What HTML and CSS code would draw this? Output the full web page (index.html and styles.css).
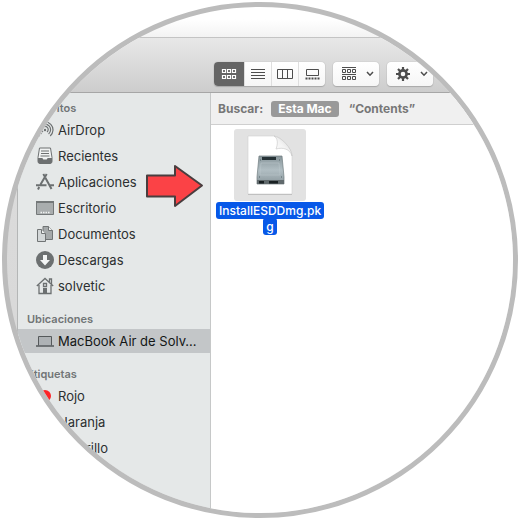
FILE: index.html
```html
<!DOCTYPE html>
<html lang="es">
<head>
<meta charset="utf-8">
<title>Contents</title>
<link rel="stylesheet" href="styles.css">
</head>
<body>
<main class="lens">
  <div class="window">
    <header class="toolbar">
      <div class="group">
        <button class="tool tool-active" aria-label="Iconos">
          <svg width="16" height="12" viewBox="0 0 16 12" fill="none" stroke="currentColor" stroke-width="1.200"><path d="M1.500 1.500h3v3h-3zM6.500 1.500h3v3h-3zM11.500 1.500h3v3h-3zM1.500 7.500h3v3h-3zM6.500 7.500h3v3h-3zM11.500 7.500h3v3h-3z"/></svg>
        </button>
        <button class="tool" aria-label="Lista">
          <svg width="14" height="12" viewBox="0 0 14 12" fill="none" stroke="currentColor"><path d="M0 1.500h14M0 4.500h14M0 7.500h14M0 10.500h14"/></svg>
        </button>
        <button class="tool" aria-label="Columnas">
          <svg width="16" height="12" viewBox="0 0 16 12" fill="none" stroke="currentColor"><path d="M.5 1.500h15v9H.5zM5.500 1.500v9M10.500 1.500v9"/></svg>
        </button>
        <button class="tool" aria-label="Galería">
          <svg width="15" height="12" viewBox="0 0 15 12" fill="none" stroke="currentColor"><path d="M1.500 1.500h12v6h-12z"/><path d="M.5 10.500h14" stroke-width="2" stroke-dasharray="2 1"/></svg>
        </button>
      </div>
      <div class="group">
        <button class="tool tool-menu" aria-label="Agrupar">
          <svg width="14" height="14" viewBox="0 0 14 14" fill="none" stroke="currentColor"><path d="M0 .5h14M0 7.500h14M.5 2.500h3v3h-3zM5.500 2.500h3v3h-3zM10.500 2.500h3v3h-3zM.5 9.500h3v3h-3zM5.500 9.500h3v3h-3zM10.500 9.500h3v3h-3z"/></svg>
          <svg width="8" height="6" viewBox="0 0 8 6" fill="none" stroke="currentColor" stroke-width="1.500"><path d="M1 1l3 3.200L7 1"/></svg>
        </button>
      </div>
      <div class="group">
        <button class="tool tool-menu" aria-label="Acciones">
          <svg width="14" height="14" viewBox="-7 -7 14 14" fill="none" stroke="currentColor"><circle r="3.600" stroke-width="2.600"/><path d="M0-7v3M0 7V4M-7 0h3M7 0H4M-5-5l2.200 2.200M5 5L2.800 2.800M-5 5l2.200-2.200M5-5L2.800-2.800" stroke-width="2.200"/></svg>
          <svg width="8" height="6" viewBox="0 0 8 6" fill="none" stroke="currentColor" stroke-width="1.500"><path d="M1 1l3 3.200L7 1"/></svg>
        </button>
      </div>
    </header>
    <div class="content">
      <nav class="sidebar">
        <h2 class="heading">Favoritos</h2>
        <ul class="list">
          <li><a class="place" href="#"><svg class="icon" viewBox="0 0 18 18" fill="none" stroke="currentColor" stroke-width="1.200"><path d="M3.800 15A8 8 0 1 1 14.200 15M5.400 13A5.600 5.600 0 1 1 12.600 13M7 11A3.200 3.200 0 1 1 11 11"/><circle cx="9" cy="9" r="1.200" fill="currentColor" stroke="none"/></svg>AirDrop</a></li>
          <li><a class="place" href="#"><svg class="icon" viewBox="0 0 18 18"><path d="M3.500 1h11l1.500 9.500v4a2 2 0 0 1-2 2H4a2 2 0 0 1-2-2v-4z" fill="#f0f2f2" stroke="#6d7071"/><path d="M5 4h8M5 6.500h8M4.500 9h9" stroke="#6d7071" stroke-width="1.200"/><path d="M2 11h4.500c.3 1 .8 1.500 1.500 1.500h2c.7 0 1.200-.5 1.500-1.500H16v3.500a2 2 0 0 1-2 2H4a2 2 0 0 1-2-2z" fill="#6d7071"/></svg>Recientes</a></li>
          <li><a class="place" href="#"><svg class="icon" viewBox="0 0 18 18" fill="none" stroke="currentColor" stroke-width="2"><path d="M7.300 1l2.200 3.700M10.700 1L4.500 11.500M9.500 5l6 11M0 12.200h10.500M13.300 12.200H18M3.200 14l-1.200 2.500"/></svg>Aplicaciones</a></li>
          <li><a class="place" href="#"><svg class="icon" viewBox="0 0 18 18"><path d="M.5 2.500h17v13H.5z" fill="#a9adae" stroke="#747879"/><path d="M0 3h18" stroke="#747879" stroke-width="2"/><path d="M4.500 13.500h9" stroke="#f1f3f3" stroke-width="1.500" stroke-dasharray="1.500 1"/></svg>Escritorio</a></li>
          <li><a class="place" href="#"><svg class="icon" viewBox="0 0 18 18" stroke="#707475"><path d="M7 1.500h5.500l4 4v9H7z" fill="#a5a9aa"/><path d="M12.500 1.500v4h4" fill="#eef0f0"/><path d="M1.500 4.500h4l4 4v8h-8z" fill="#d3d7d8"/><path d="M5.500 4.500v4h4" fill="#eef0f0"/></svg>Documentos</a></li>
          <li><a class="place" href="#"><svg class="icon" viewBox="0 0 18 18"><circle cx="9" cy="9" r="9" fill="#6c7071"/><path d="M7 4h4v5h3l-5 5.500L4 9h3z" fill="#f3f5f5"/></svg>Descargas</a></li>
          <li><a class="place" href="#"><svg class="icon" viewBox="0 0 18 18" fill="none" stroke="currentColor" stroke-width="1.300"><path d="M.8 9L9 1.500 17.200 9M13.500 5V2h2v5M3 8v8.500h12V8"/><path d="M7.500 6.500h3v3h-3z"/><path d="M7 11h4v5.500H7z" fill="currentColor" stroke="none"/></svg>solvetic</a></li>
        </ul>
        <h2 class="heading">Ubicaciones</h2>
        <ul class="list">
          <li><a class="place place-active" href="#"><svg class="icon" viewBox="0 0 18 18" fill="none" stroke="#55595b"><path d="M2.500 13.500v-9h13v9" fill="#aeb2b5"/><path d="M0 14h18" stroke-width="1.500"/></svg>MacBook Air de Solv...</a></li>
        </ul>
        <h2 class="heading">Etiquetas</h2>
        <ul class="list">
          <li><a class="place" href="#"><span class="icon"><span class="dot dot-red"></span></span>Rojo</a></li>
          <li><a class="place" href="#"><span class="icon"><span class="dot dot-orange"></span></span>Naranja</a></li>
          <li><a class="place" href="#"><span class="icon"><span class="dot dot-yellow"></span></span>Amarillo</a></li>
        </ul>
      </nav>
      <section class="results">
        <div class="scope">
          <span>Buscar:</span>
          <button class="scope-button scope-active">Esta Mac</button>
          <button class="scope-button">“Contents”</button>
        </div>
        <div class="files">
          <figure class="file">
            <div class="thumb">
              <svg width="50" height="64" viewBox="0 0 50 64">
                <defs>
                  <linearGradient id="metal" x1="0" y1="0" x2="0" y2="1"><stop offset="0" stop-color="#87959a"/><stop offset=".5" stop-color="#b1bec3"/><stop offset="1" stop-color="#8b989d"/></linearGradient>
                  <linearGradient id="curl" x1="0" y1="1" x2="1" y2="0"><stop offset="0" stop-color="#fff"/><stop offset=".5" stop-color="#f3f3f3"/><stop offset="1" stop-color="#cfcfcf"/></linearGradient>
                </defs>
                <path d="M3 4h26c7 1 18 12 18 20v38H3z" fill="#b9b9b9"/>
                <path d="M3 3h26c7 1 18 12 18 20v38H3z" fill="#fff" stroke="#d2d2d2" stroke-width=".6"/>
                <path d="M29 3c4 2 4 8 2 13 7-2 14 0 16 7 0-8-11-19-18-20z" fill="url(#curl)" stroke="#c4c4c4" stroke-width=".6"/>
                <path d="M14 23h23l2 21v7H12v-7z" fill="url(#metal)" stroke="#707c80" stroke-width=".7"/>
                <path d="M17 24h14v3H17z" fill="#263236"/>
                <path d="M12 47h27v4H12z" fill="#60696c"/>
                <path d="M14 48h5v2.500h-5zM24 48h9v2.500h-9z" fill="#182022"/>
                <path d="M15 27h1M34 27h1M14 44h1M36 44h1" stroke="#52646b"/>
                <path d="M16 30h18l1 12H15z" fill="none" stroke="#bdc9cd" stroke-width=".5"/>
              </svg>
            </div>
            <figcaption class="caption"><span class="caption-text">InstallESDDmg.pkg</span></figcaption>
          </figure>
        </div>
      </section>
    </div>
  </div>
  <svg class="arrow" width="59" height="45" viewBox="0 0 59 45"><path d="M2 12.500h28V3L57 22.500 30 43v-9.500H2z" fill="#fb4246" stroke="#493e3f" stroke-width="2" stroke-linejoin="round"/></svg>
</main>
</body>
</html>
```

FILE: styles.css
```css
* { box-sizing: border-box; }

body {
  margin: 0;
  padding: 2px;
  background: #fff;
  color: #2c2f30;
  font-family: Inter, "Liberation Sans", sans-serif;
  font-size: 13px;
}

button { font: inherit; border: 0; margin: 0; padding: 0; }

.lens {
  position: relative;
  display: flex;
  width: 100%;
  aspect-ratio: 1;
  padding: 30px 0 0 10px;
  overflow: hidden;
  border: 5px solid #bcbcbc;
  border-radius: 50%;
  background: linear-gradient(#fff 0, #fff 12px, #f3f3f3 30px, #dcdcdc 90px, #d6d6d6);
}

.window {
  flex: 1;
  min-width: 0;
  display: flex;
  flex-direction: column;
  border-top: 1px solid #c4c4c4;
  border-left: 1px solid #b4b6b6;
}

.toolbar {
  display: flex;
  gap: 8px;
  padding: 24px 0 6px 196px;
  border-bottom: 1px solid #a6a6a6;
  background: linear-gradient(#e8e8e8, #cdcdcd);
}

.group {
  display: flex;
  border-radius: 4px;
  background: linear-gradient(#fff, #f6f6f6);
  box-shadow: 0 0 1px #999, 0 1px 1px #aaa;
  overflow: hidden;
}

.tool {
  display: flex;
  align-items: center;
  justify-content: center;
  width: 27px;
  height: 24px;
  border-left: 1px solid #dedede;
  background: none;
  color: #4d4d4d;
}

.tool:first-child { border-left: 0; }
.tool-active { width: 30px; background: #656565; color: #fff; }
.tool-menu { width: 46px; gap: 10px; padding-left: 4px; }

.content { flex: 1; display: flex; min-height: 0; }

.sidebar {
  flex: none;
  width: 193px;
  padding-top: 5px;
  border-right: 1px solid #c6c8c8;
  background: #e5e8e8;
}

.heading {
  margin: 0;
  padding-left: 9px;
  color: #717576;
  font-size: 11px;
  font-weight: 600;
  line-height: 20px;
}

.list {
  display: flex;
  flex-direction: column;
  gap: 2px;
  margin: 0 0 11px;
  padding: 0;
  list-style: none;
}

.place {
  display: flex;
  align-items: center;
  gap: 4px;
  height: 24px;
  padding-left: 18px;
  color: inherit;
  text-decoration: none;
  white-space: nowrap;
}

.place-active { background: #c3c6c8; color: #141616; }

.icon {
  flex: none;
  display: grid;
  place-items: center;
  width: 18px;
  height: 18px;
  color: #6c7071;
}

.dot { width: 12px; height: 12px; border-radius: 50%; }
.dot-red { background: #fc2427; }
.dot-orange { background: #fd9a28; }
.dot-yellow { background: #fdd02f; }

.results { flex: 1; min-width: 0; background: #fff; }

.scope {
  display: flex;
  align-items: center;
  height: 32px;
  padding-left: 7px;
  border-bottom: 1px solid #cfcfcf;
  background: #f0f0f0;
  color: #777;
  font-size: 12px;
  font-weight: 700;
}

.scope-button {
  height: 16px;
  padding: 0 10px;
  border-radius: 3px;
  background: none;
  color: inherit;
  line-height: 16px;
}

.scope-active { margin-left: 8px; padding: 0 7px; background: #999; color: #fff; }

.files { display: flex; padding: 4px 5px; }

.file {
  display: flex;
  flex-direction: column;
  align-items: center;
  gap: 2px;
  width: 108px;
  margin: 0;
}

.thumb {
  display: grid;
  place-items: center;
  width: 72px;
  height: 72px;
  border-radius: 3px;
  background: #e2e2e2;
}

.caption {
  width: 100%;
  color: #fff;
  font-size: 12px;
  font-weight: 500;
  line-height: 16px;
  text-align: center;
  word-break: break-all;
}

.caption-text {
  padding: 1px 3px;
  border-radius: 3px;
  background: #0758e8;
  -webkit-box-decoration-break: clone;
  box-decoration-break: clone;
}

.arrow { position: absolute; left: 138px; top: 156px; }
```
